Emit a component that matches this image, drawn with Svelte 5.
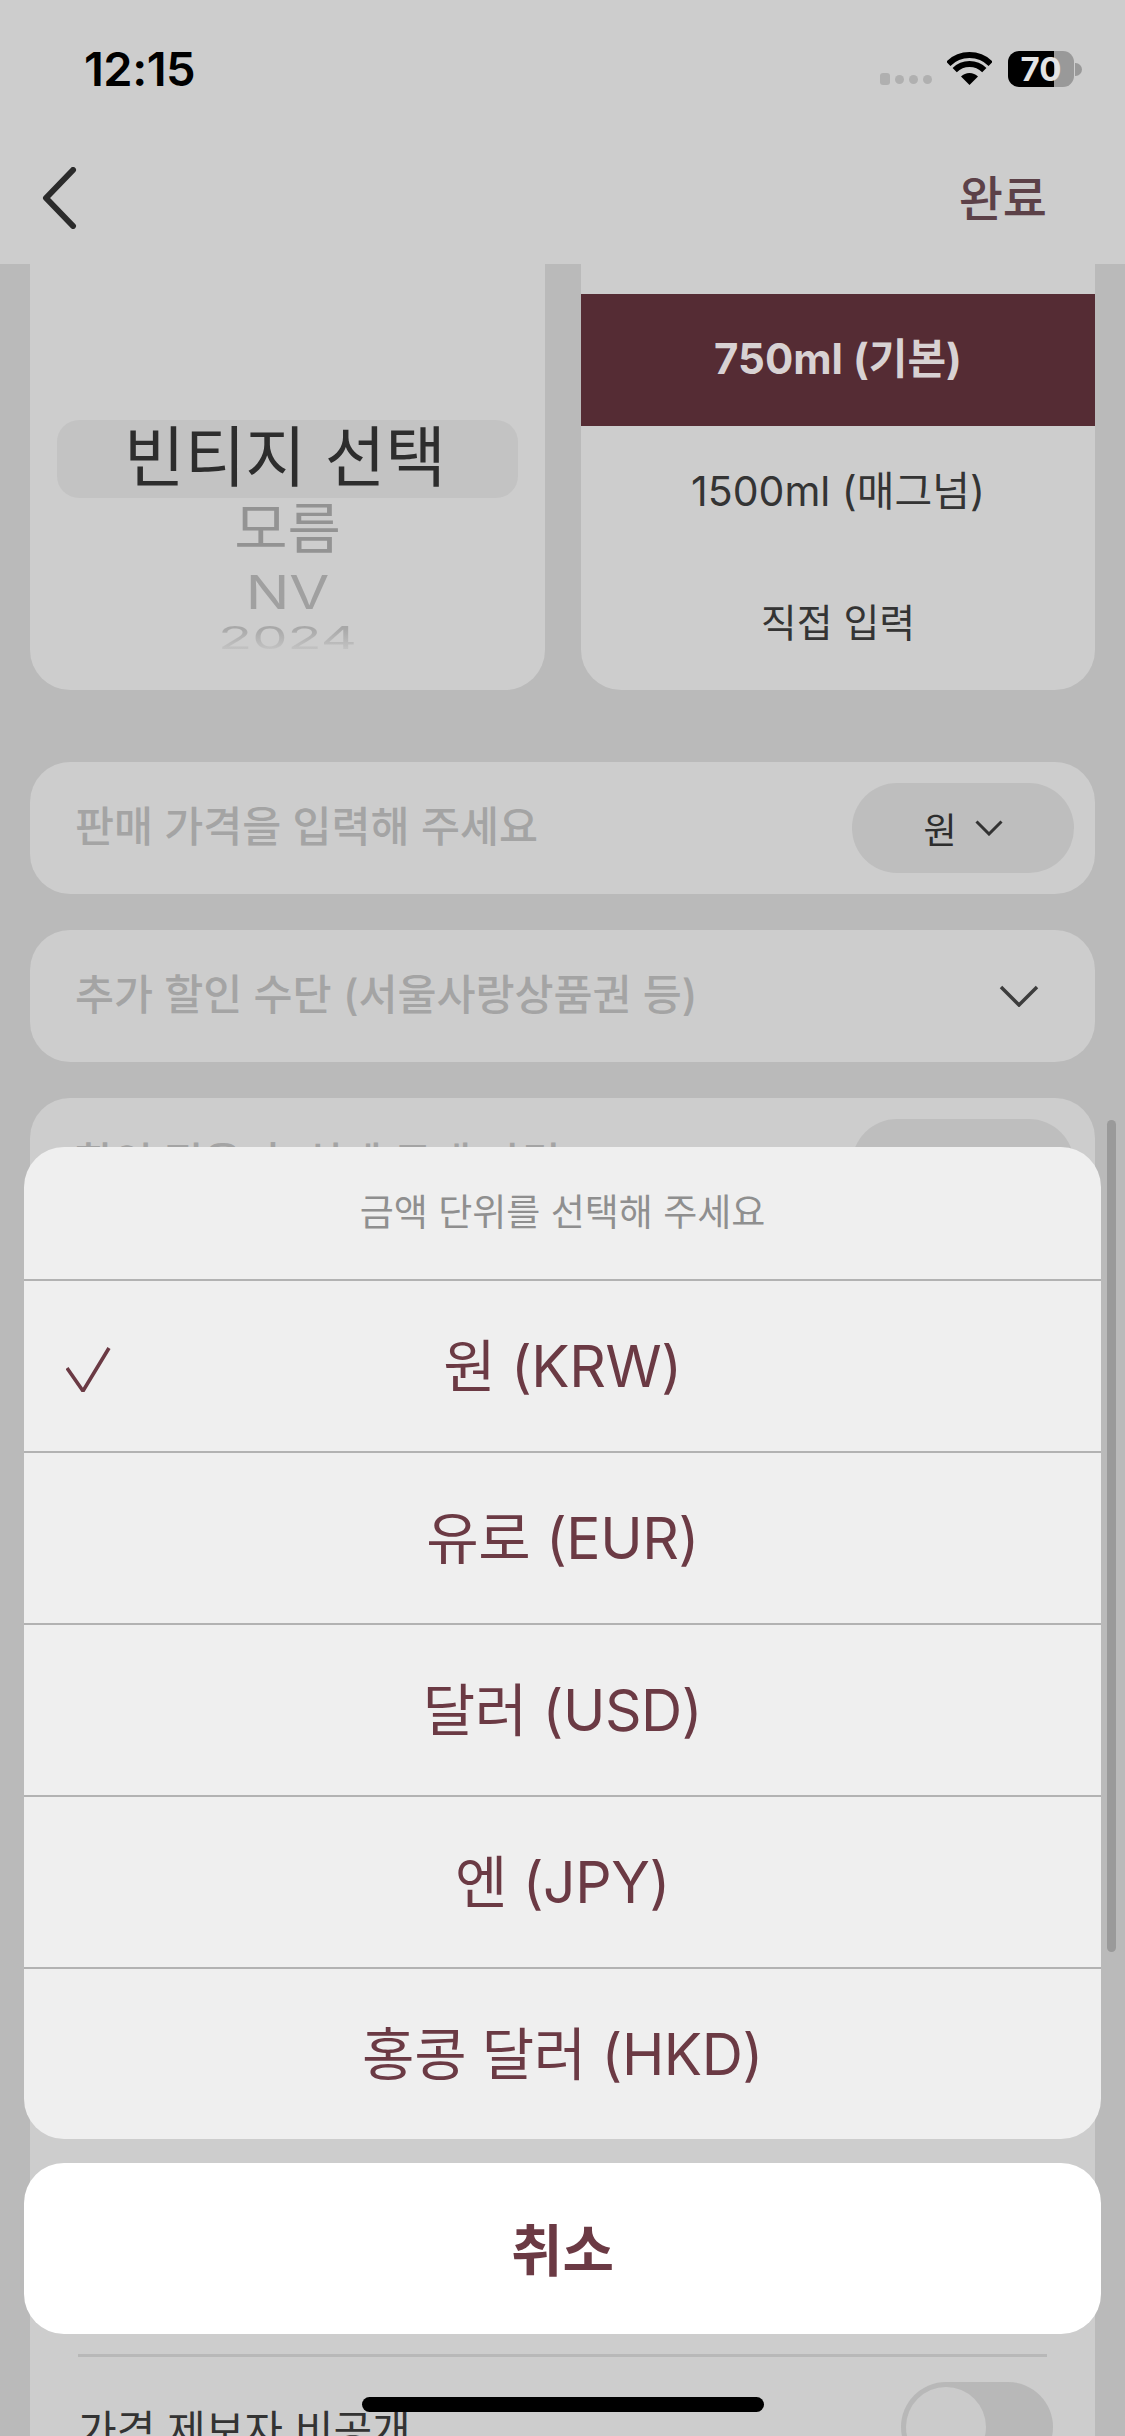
<script>
  const currencies = ["원 (KRW)", "유로 (EUR)", "달러 (USD)", "엔 (JPY)", "홍콩 달러 (HKD)"];
  let selected = $state(0);
</script>

<div class="phone">
  <header class="top">
    <div class="status">
      <span class="time">12:15</span>
      <div class="status-icons">
        <div class="signal"><i class="first"></i><i></i><i></i><i></i></div>
        <svg class="wifi" width="45" height="33" viewBox="0 0 45 33">
          <path d="M22.5 33 14 24.5a12 12 0 0 1 17 0Z" fill="#000" />
          <path d="M7.7 18.2a21 21 0 0 1 29.6 0" fill="none" stroke="#000" stroke-width="6" />
          <path d="M1.3 11.8a30 30 0 0 1 42.4 0" fill="none" stroke="#000" stroke-width="6" />
        </svg>
        <div class="battery">70</div>
        <div class="nub"></div>
      </div>
    </div>
    <nav class="nav">
      <svg class="back" width="36" height="62" viewBox="0 0 36 62">
        <path d="M31 3 4 31l27 28" fill="none" stroke="#2b2b2b" stroke-width="6" stroke-linecap="round" stroke-linejoin="round" />
      </svg>
      <span class="done">완료</span>
    </nav>
  </header>

  <main class="content">
    <section class="pickers">
      <div class="card wheel">
        <div class="wheel-current">빈티지 선택</div>
        <div class="wheel-item one">모름</div>
        <div class="wheel-item two">NV</div>
        <div class="wheel-item three">2024</div>
      </div>
      <div class="card sizes">
        <div class="size active">750ml (기본)</div>
        <div class="size">1500ml (매그넘)</div>
        <div class="size direct">직접 입력</div>
      </div>
    </section>

    <div class="card field">
      <span class="placeholder">판매 가격을 입력해 주세요</span>
      <div class="unit">
        원
        <svg width="28" height="16" viewBox="0 0 28 16"><path d="M1.5 1.5 14 14 26.5 1.5" fill="none" stroke="#333" stroke-width="3" /></svg>
      </div>
    </div>

    <div class="card field">
      <span class="placeholder">추가 할인 수단 (서울사랑상품권 등)</span>
      <svg class="field-chevron" width="40" height="22" viewBox="0 0 40 22"><path d="M2 2 20 20 38 2" fill="none" stroke="#3d3d3d" stroke-width="3.5" /></svg>
    </div>

    <div class="card details">
      <div class="field bare">
        <span class="placeholder">할인 적용 후 실제 구매 가격</span>
        <div class="unit"></div>
      </div>
      <div class="hidden-rows"></div>
      <div class="divider"></div>
      <div class="toggle-row">
        <span>가격 제보자 비공개</span>
        <div class="toggle"><div class="knob"></div></div>
      </div>
    </div>
  </main>

  <div class="scrollbar"></div>

  <div class="sheet-wrap">
    <div class="sheet">
      <div class="sheet-title">금액 단위를 선택해 주세요</div>
      {#each currencies as c, i}
        <button class="option" onclick={() => (selected = i)}>
          {#if selected === i}
            <svg class="check" width="45" height="45" viewBox="0 0 45 45"><path d="M1 21 17 44 43 1" fill="none" stroke="#6b3a44" stroke-width="3.6" /></svg>
          {/if}
          {c}
        </button>
      {/each}
    </div>
    <button class="cancel">취소</button>
  </div>

  <div class="home"></div>
</div>

<style>
  :global(body) {
    margin: 0;
    background: #bababa;
  }
  .phone {
    position: relative;
    width: 1125px;
    height: 2436px;
    overflow: hidden;
    background: #bababa;
    font-family: Inter, "Noto Sans CJK KR", sans-serif;
    color: #333;
  }
  .top {
    height: 264px;
    background: #cdcdcd;
  }
  .status {
    height: 132px;
    display: flex;
    justify-content: space-between;
    padding: 0 43px 0 84px;
  }
  .time {
    font-size: 47px;
    font-weight: 600;
    color: #000;
    line-height: 138px;
    letter-spacing: -0.5px;
  }
  .status-icons {
    display: flex;
    align-items: flex-start;
    padding-top: 51px;
  }
  .signal {
    display: flex;
    align-items: center;
    gap: 5px;
    margin: 22px 15px 0 0;
  }
  .signal i {
    width: 9px;
    height: 9px;
    border-radius: 50%;
    background: #b0b0b0;
  }
  .signal i.first {
    height: 12px;
    border-radius: 3px;
    width: 10px;
  }
  .wifi {
    margin-top: 1px;
  }
  .battery {
    width: 66px;
    height: 36px;
    margin-left: 16px;
    border-radius: 11px;
    background: linear-gradient(90deg, #000 70%, #999 70%);
    color: #e4e4e4;
    font-size: 33px;
    font-weight: 700;
    line-height: 36px;
    text-align: center;
  }
  .nub {
    width: 7px;
    height: 13px;
    margin: 12px 0 0 1px;
    border-radius: 0 7px 7px 0;
    background: #999;
  }
  .nav {
    height: 132px;
    display: flex;
    justify-content: space-between;
    align-items: center;
    padding: 0 78px 0 42px;
  }
  .done {
    font-size: 48px;
    font-weight: 500;
    color: #5c4148;
    line-height: 60px;
    margin-top: 2px;
  }

  .content {
    display: flex;
    flex-direction: column;
    gap: 36px;
    padding: 0 30px;
  }
  .card {
    background: #cdcdcd;
    border-radius: 40px;
  }
  .pickers {
    display: grid;
    grid-template-columns: 515px 514px;
    gap: 36px;
    margin-bottom: 36px;
  }
  .wheel,
  .sizes {
    height: 426px;
    border-radius: 0 0 40px 40px;
    box-sizing: border-box;
  }
  .wheel {
    padding: 156px 27px 0;
    text-align: center;
    overflow: hidden;
  }
  .wheel-current {
    height: 78px;
    line-height: 74px;
    padding-right: 5px;
    border-radius: 22px;
    background: #c3c3c3;
    font-size: 66px;
    color: #2d2d2d;
  }
  .wheel-item {
    font-size: 58px;
  }
  .one {
    height: 60px;
    line-height: 60px;
    color: #939393;
    transform: scaleY(0.94);
  }
  .two {
    height: 68px;
    line-height: 68px;
    color: #a0a0a0;
    transform: scaleY(0.8);
  }
  .three {
    height: 60px;
    line-height: 60px;
    margin: -18px 0;
    font-size: 56px;
    transform: scaleY(0.56);
    background: linear-gradient(#a8a8a8 20%, #c3c3c3 85%);
    -webkit-background-clip: text;
    background-clip: text;
    color: transparent;
  }
  .sizes {
    padding-top: 30px;
    overflow: hidden;
  }
  .size {
    height: 132px;
    line-height: 130px;
    text-align: center;
    font-size: 41px;
    color: #343434;
  }
  .size.active {
    background: #552c34;
    color: #d8d2d3;
    font-weight: 700;
    font-size: 42px;
  }
  .size.direct {
    font-size: 39px;
  }

  .field {
    height: 132px;
    display: flex;
    align-items: center;
    justify-content: space-between;
    box-sizing: border-box;
    padding: 0 21px 0 45px;
  }
  .placeholder {
    font-size: 42.4px;
    font-weight: 500;
    color: #a4a4a4;
    line-height: 50px;
    margin-top: -3px;
  }
  .unit {
    width: 222px;
    height: 90px;
    border-radius: 45px;
    background: #bebebe;
    display: flex;
    align-items: center;
    justify-content: center;
    gap: 18px;
    font-size: 36px;
    color: #2d2d2d;
  }
  .field-chevron {
    margin-right: 35px;
  }
  .details {
    display: flex;
    flex-direction: column;
    border-radius: 40px 40px 0 0;
  }
  .hidden-rows {
    height: 1124px;
  }
  .divider {
    height: 3px;
    margin: 0 48px;
    background: #b8b8b8;
  }
  .toggle-row {
    display: flex;
    align-items: center;
    justify-content: space-between;
    padding: 25px 42px 0 48px;
    font-size: 42px;
    color: #333;
  }
  .toggle {
    width: 152px;
    height: 90px;
    border-radius: 45px;
    background: #b8b8b8;
    padding: 5px;
    box-sizing: border-box;
  }
  .knob {
    width: 80px;
    height: 80px;
    border-radius: 50%;
    background: #cbcbcb;
  }

  .scrollbar {
    position: absolute;
    top: 1120px;
    left: 1107px;
    width: 9px;
    height: 832px;
    border-radius: 5px;
    background: #9a9a9a;
  }
  .sheet-wrap {
    position: absolute;
    left: 24px;
    top: 1147px;
    width: 1077px;
    display: flex;
    flex-direction: column;
    gap: 24px;
  }
  .sheet {
    background: #efefef;
    border-radius: 40px;
    overflow: hidden;
  }
  .sheet-title {
    height: 132px;
    line-height: 132px;
    text-align: center;
    font-size: 37px;
    color: #8f8f8f;
  }
  .option {
    position: relative;
    display: block;
    width: 100%;
    height: 172px;
    padding: 0 0 9px;
    border: 0;
    border-top: 2px solid #b2b2b2;
    background: none;
    font: inherit;
    font-size: 57px;
    letter-spacing: -0.4px;
    color: #6b3a44;
  }
  .check {
    position: absolute;
    left: 42px;
    top: 66px;
  }
  .cancel {
    height: 171px;
    padding: 0 0 5px;
    border: 0;
    border-radius: 40px;
    background: #fff;
    font: inherit;
    font-size: 56px;
    font-weight: 700;
    color: #6b3a44;
  }
  .home {
    position: absolute;
    left: 362px;
    top: 2397px;
    width: 402px;
    height: 15px;
    border-radius: 8px;
    background: #000;
  }
</style>
